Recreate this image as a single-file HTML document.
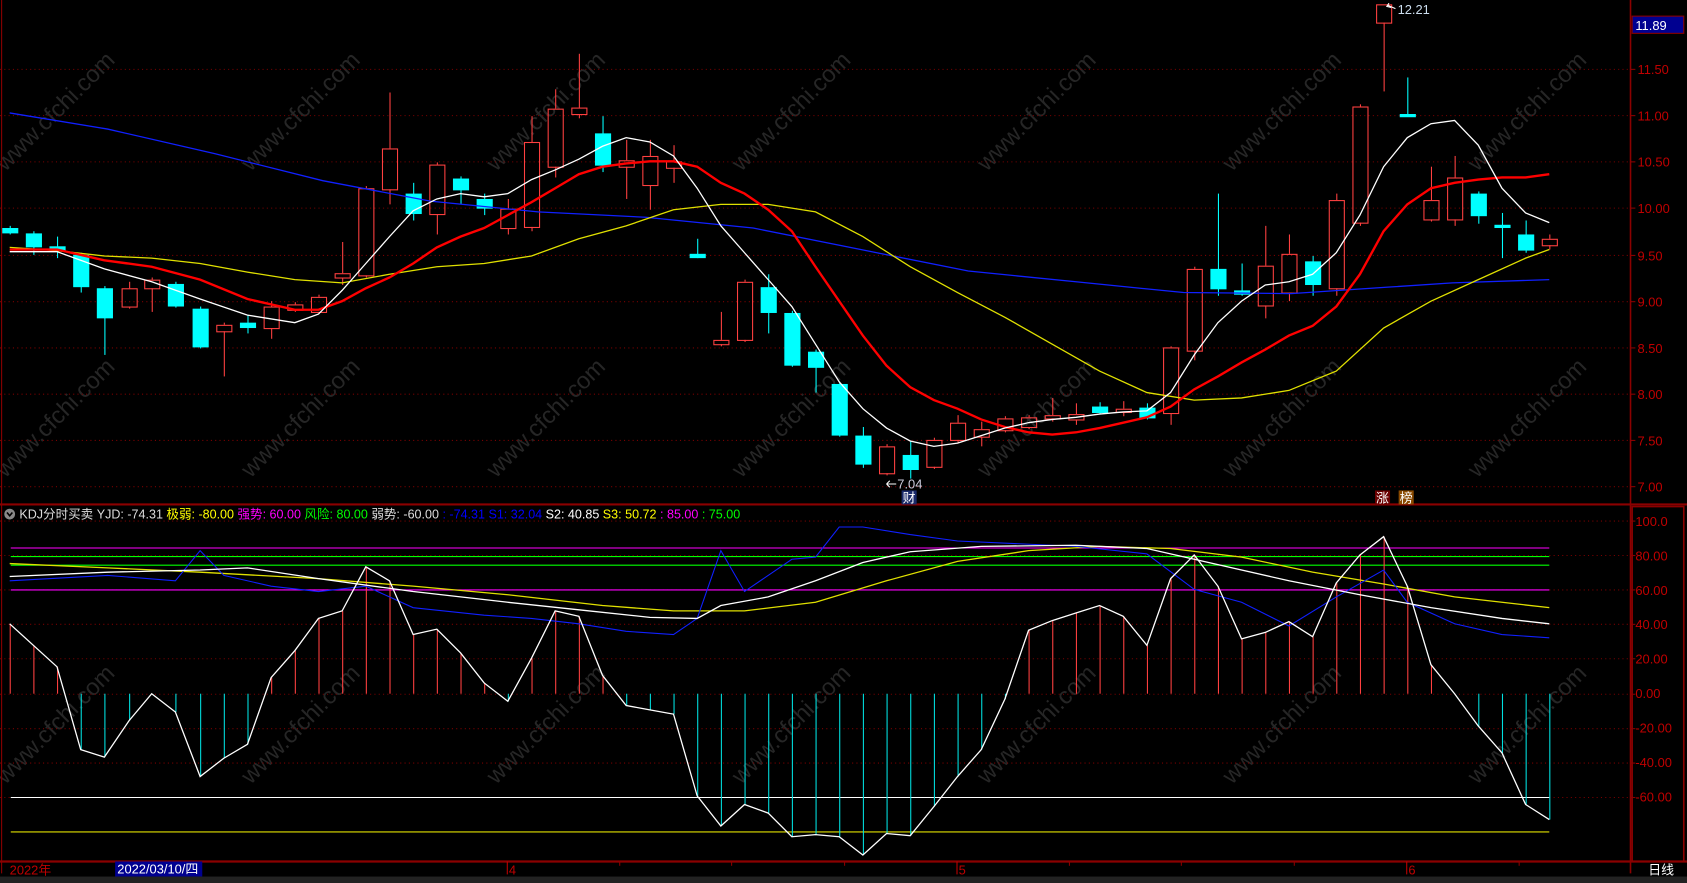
<!DOCTYPE html>
<html><head><meta charset="utf-8"><style>
html,body{margin:0;padding:0;background:#000;overflow:hidden}
svg{display:block}
text{font-family:"Liberation Sans","Noto Sans CJK SC",sans-serif}
</style></head><body>
<svg id="s" width="1687" height="883" viewBox="0 0 1568 821" preserveAspectRatio="none" xmlns="http://www.w3.org/2000/svg">
<rect width="1568" height="821" fill="#000"/>
<g id="wm" fill="#262626" font-size="22"></g>
<g id="grid"></g>
<g id="g"></g>
<line x1="0" y1="469" x2="1568" y2="469" stroke="#8b0000" stroke-width="2"/>
<line x1="0" y1="801" x2="1568" y2="801" stroke="#8b0000" stroke-width="2"/>
<line x1="1515.5" y1="0" x2="1515.5" y2="812" stroke="#8b0000" stroke-width="1.5"/>
<line x1="1.5" y1="0" x2="1.5" y2="812" stroke="#8b0000" stroke-width="1"/>
<rect x="1517" y="471" width="48" height="330" fill="none" stroke="#8b0000" stroke-width="1.5"/>
<rect x="1517" y="15" width="48" height="16" fill="#000090" stroke="#8b0000"/>
<text x="1520" y="28" fill="#fff" font-size="12">11.89</text>
<g fill="#c00000" font-size="12">
<text x="1522" y="69">11.50</text><text x="1522" y="112">11.00</text><text x="1522" y="155">10.50</text>
<text x="1522" y="198">10.00</text><text x="1522" y="242">9.50</text><text x="1522" y="285">9.00</text>
<text x="1522" y="328">8.50</text><text x="1522" y="371">8.00</text><text x="1522" y="414">7.50</text>
<text x="1522" y="457">7.00</text>
<text x="1520" y="489">100.0</text><text x="1520" y="521">80.00</text><text x="1520" y="553">60.00</text>
<text x="1520" y="585">40.00</text><text x="1520" y="617">20.00</text><text x="1520" y="649">0.00</text>
<text x="1520" y="681">-20.00</text><text x="1520" y="713">-40.00</text><text x="1520" y="745">-60.00</text>
</g>
<circle cx="9" cy="478" r="5" fill="#888"/><path d="M6.5 476.5 L9 479.5 L11.5 476.5" stroke="#000" stroke-width="1.5" fill="none"/>
<text y="482" font-size="11.6" textLength="670" lengthAdjust="spacingAndGlyphs" x="18"><tspan fill="#ddd">KDJ分时买卖 YJD: -74.31 </tspan><tspan fill="#ff0">极弱: -80.00 </tspan><tspan fill="#f0f">强势: 60.00 </tspan><tspan fill="#0f0">风险: 80.00 </tspan><tspan fill="#ddd">弱势: -60.00 </tspan><tspan fill="#00f">: -74.31 S1: 32.04 </tspan><tspan fill="#fff">S2: 40.85 </tspan><tspan fill="#ff0">S3: 50.72 </tspan><tspan fill="#f0f">: 85.00 </tspan><tspan fill="#0f0">: 75.00</tspan></text>
<path d="M1290 5 L1297 8" stroke="#fff"/><path d="M1291 3 L1289 6 L1293 7" stroke="#fff" fill="none"/>
<text x="1299" y="13" fill="#cde" font-size="12">12.21</text>
<path d="M824 450 L833 450 M824 450 l3 -3 M824 450 l3 3" stroke="#fff" fill="none"/>
<text x="834" y="454" fill="#ccd" font-size="12">7.04</text>
<rect x="838" y="456" width="14" height="13" fill="#1a2a6a"/><text x="839" y="467" fill="#fff" font-size="12">财</text>
<rect x="1278" y="456" width="14" height="13" fill="#6a0000"/><text x="1279" y="467" fill="#fff" font-size="12">涨</text>
<rect x="1300" y="456" width="14" height="13" fill="#8a4a00"/><text x="1301" y="467" fill="#fff" font-size="12">榜</text>
<text x="9" y="813" fill="#c00000" font-size="12">2022年</text>
<rect x="107" y="801" width="81" height="14" fill="#000090"/>
<text x="109" y="812" fill="#fff" font-size="12">2022/03/10/四</text>
<line x1="471.5" y1="801" x2="471.5" y2="813" stroke="#c00000"/><text x="473" y="813" fill="#c00000" font-size="12">4</text>
<line x1="889.5" y1="801" x2="889.5" y2="813" stroke="#c00000"/><text x="891" y="813" fill="#c00000" font-size="12">5</text>
<line x1="1307.5" y1="801" x2="1307.5" y2="813" stroke="#c00000"/><text x="1309" y="813" fill="#c00000" font-size="12">6</text>
<g stroke="#8b0000"><line x1="576" y1="801" x2="576" y2="805"/><line x1="680" y1="801" x2="680" y2="805"/><line x1="785" y1="801" x2="785" y2="805"/><line x1="994" y1="801" x2="994" y2="805"/><line x1="1098" y1="801" x2="1098" y2="805"/><line x1="1203" y1="801" x2="1203" y2="805"/><line x1="1412" y1="801" x2="1412" y2="805"/></g>
<text x="1532" y="813" fill="#fff" font-size="12">日线</text>
<rect x="0" y="815" width="1568" height="6" fill="#222"/>
</svg>
<script>
var NS="http://www.w3.org/2000/svg",g=document.getElementById('g'),gr=document.getElementById('grid'),wm=document.getElementById('wm');
function el(p,t,a){var e=document.createElementNS(NS,t);for(var k in a)e.setAttribute(k,a[k]);p.appendChild(e);return e;}
[64,107,150,193,237,280,323,366,409,452].forEach(function(y){el(gr,'line',{x1:0,x2:1515,y1:y+.5,y2:y+.5,stroke:'#7a0000','stroke-dasharray':'1 3'});el(gr,'line',{x1:1515,x2:1520,y1:y+.5,y2:y+.5,stroke:'#8b0000'});});
[484,516,548,580,612,645,677,709,741].forEach(function(y){el(gr,'line',{x1:0,x2:1515,y1:y+.5,y2:y+.5,stroke:'#7a0000','stroke-dasharray':'1 3'});el(gr,'line',{x1:1515,x2:1520,y1:y+.5,y2:y+.5,stroke:'#8b0000'});});
for(var i=0;i<7;i++)for(var j=0;j<3;j++){var x=5+i*228,y=160+j*285;var t=el(wm,'text',{x:x,y:y,transform:'rotate(-45 '+x+' '+y+')'});t.textContent='www.cfchi.com';}
var C=[[9,212,216,210,218,0],[31,217,229,215,237,0],[53,229,232,220,240,0],[75,237,266,235,272,0],[97,268,295,266,330,0],[120,285,268,262,287,1],[141,268,260,258,290,1],[163,264,284,262,286,0],[186,287,322,285,324,0],[208,308,302,300,350,1],[230,300,304,293,310,0],[252,305,285,280,315,1],[274,288,283,281,290,1],[296,290,276,274,292,1],[318,258,254,225,265,1],[340,256,175,173,258,1],[362,176,138,86,190,1],[384,180,198,170,205,0],[406,199,153,151,218,1],[428,166,176,164,190,0],[450,185,193,180,200,0],[472,212,194,185,218,1],[494,211,132,108,215,1],[516,155,101,83,165,1],[538,106,100,50,110,1],[560,124,153,108,160,0],[582,155,149,130,185,1],[604,172,145,130,195,1],[626,156,150,135,170,1],[648,236,239,222,240,0],[670,320,316,290,322,1],[692,316,262,260,318,1],[714,267,290,255,310,0],[736,291,339,289,341,0],[758,327,341,325,365,0],[780,357,404,355,406,0],[802,405,431,397,435,0],[824,440,415,413,442,1],[846,423,436,410,445,0],[868,434,409,407,436,1],[890,409,393,386,412,1],[912,406,399,392,415,1],[934,400,389,387,402,1],[956,397,388,386,399,1],[978,389,386,370,392,1],[1000,390,385,375,395,1],[1022,378,383,374,385,0],[1044,383,380,373,387,1],[1066,379,388,375,390,0],[1088,384,323,322,395,1],[1110,326,250,248,335,1],[1132,250,268,180,275,0],[1154,270,273,245,275,0],[1176,284,247,210,296,1],[1198,272,236,218,280,1],[1220,243,264,238,275,0],[1242,268,186,180,275,1],[1264,207,99,97,210,1],[1286,21,4,4,85,1],[1308,106,108,72,108,0],[1330,204,186,155,206,1],[1352,204,165,145,210,1],[1374,180,200,178,208,0],[1396,209,211,198,240,0],[1418,218,232,205,235,0],[1440,228,222,218,232,1]];
var W=7;
C.forEach(function(c){var x=c[0],top=Math.min(c[1],c[2]),bot=Math.max(c[1],c[2]),h=Math.max(bot-top,1);
 if(c[5]){el(g,'line',{x1:x+.5,x2:x+.5,y1:c[3],y2:top,stroke:'#ff4040'});el(g,'line',{x1:x+.5,x2:x+.5,y1:bot,y2:c[4],stroke:'#ff4040'});el(g,'rect',{x:x-W+.5,y:top+.5,width:2*W,height:h,fill:'none',stroke:'#ff4040'});}
 else{el(g,'line',{x1:x+.5,x2:x+.5,y1:c[3],y2:c[4],stroke:'#00ffff'});el(g,'rect',{x:x-W,y:top,width:2*W+1,height:h+1,fill:'#00ffff'});}});
function pl(pts,col,w){el(g,'polyline',{points:pts.map(function(p){return p.join(',')}).join(' '),fill:'none',stroke:col,'stroke-width':w});}
pl([[9,105],[100,120],[200,143],[300,168],[400,187],[500,197],[600,202],[700,212],[800,232],[900,252],[1000,262],[1100,272],[1200,273],[1290,267],[1350,263],[1440,260]],'#1020ff',1.2);
pl([[9,230],[53,233],[97,238],[141,240],[186,245],[230,253],[274,260],[318,263],[362,255],[406,248],[450,245],[494,238],[538,222],[582,210],[626,195],[670,190],[714,190],[758,197],[802,220],[846,248],[890,272],[934,295],[978,320],[1022,345],[1066,365],[1110,372],[1154,370],[1198,363],[1242,345],[1286,305],[1330,280],[1374,260],[1418,240],[1440,232]],'#e0e000',1.2);
pl([[9,232],[53,232],[97,242],[141,248],[186,260],[230,278],[274,288],[296,288],[318,280],[340,268],[362,258],[384,245],[406,230],[428,220],[450,212],[472,200],[494,188],[516,175],[538,162],[560,155],[582,152],[604,150],[626,150],[648,155],[670,170],[692,180],[714,195],[736,215],[758,248],[780,280],[802,312],[824,340],[846,360],[868,372],[890,380],[912,390],[934,397],[956,402],[978,404],[1000,402],[1022,398],[1044,393],[1066,388],[1088,378],[1110,362],[1132,350],[1154,337],[1176,325],[1198,312],[1220,303],[1242,285],[1264,255],[1286,215],[1308,190],[1330,175],[1352,170],[1374,167],[1396,165],[1418,165],[1440,162]],'#ff0000',2.2);
pl([[9,234],[53,234],[97,250],[141,262],[186,278],[230,293],[274,300],[296,292],[318,270],[340,245],[362,220],[384,196],[406,185],[428,180],[450,183],[472,180],[494,167],[516,158],[538,148],[560,136],[582,128],[604,132],[626,145],[648,175],[670,210],[692,235],[714,260],[736,285],[758,320],[780,355],[802,380],[824,398],[846,410],[868,415],[890,412],[912,405],[934,398],[956,393],[978,390],[1000,388],[1022,385],[1044,383],[1066,382],[1088,365],[1110,330],[1132,300],[1154,280],[1176,265],[1198,262],[1220,255],[1242,235],[1264,200],[1286,155],[1308,128],[1330,115],[1352,112],[1374,135],[1396,175],[1418,198],[1440,207]],'#ffffff',1.2);
[[509,'#ff00ff'],[517,'#00ff00'],[525,'#00ff00'],[548,'#ff00ff'],[741,'#ffffff'],[773,'#e0e000']].forEach(function(a){el(g,'line',{x1:10,x2:1440,y1:a[0]+.5,y2:a[0]+.5,stroke:a[1]});});
var O=[[9,580],[31,600],[53,620],[75,697],[97,704],[120,670],[141,645],[163,662],[186,722],[208,705],[230,692],[252,630],[274,605],[296,575],[318,568],[340,527],[362,540],[384,590],[406,585],[428,607],[450,635],[472,652],[494,612],[516,568],[538,573],[560,628],[582,656],[604,660],[626,664],[648,740],[670,768],[692,748],[714,756],[736,778],[758,776],[780,778],[802,795],[824,775],[846,777],[868,750],[890,722],[912,697],[934,650],[956,586],[978,577],[1000,570],[1022,563],[1044,573],[1066,600],[1088,538],[1110,516],[1132,545],[1154,594],[1176,588],[1198,578],[1220,592],[1242,542],[1264,516],[1286,499],[1308,545],[1330,618],[1352,645],[1374,675],[1396,700],[1418,748],[1440,762]];
O.forEach(function(p){el(g,'line',{x1:p[0]+.5,x2:p[0]+.5,y1:645,y2:p[1],stroke:p[1]<645?'#ff4040':'#00e0e0'});});
pl([[9,524],[100,528],[186,532],[296,538],[384,545],[472,553],[560,563],[626,568],[692,568],[758,560],[824,540],[890,522],[956,512],[1022,508],[1088,510],[1154,518],[1220,532],[1286,543],[1352,555],[1440,565]],'#e0e000',1.2);
pl([[9,540],[100,535],[163,540],[186,512],[208,535],[252,545],[296,550],[340,545],[384,565],[450,572],[494,575],[538,580],[582,587],[626,590],[648,575],[670,512],[692,550],[736,520],[758,518],[780,490],[802,490],[846,497],[890,503],[1000,508],[1066,515],[1110,548],[1154,560],[1198,582],[1242,555],[1286,530],[1308,560],[1352,580],[1396,590],[1440,593]],'#1020ff',1);
pl([[9,536],[100,532],[186,530],[230,528],[296,538],[384,550],[472,560],[538,567],[604,574],[648,575],[670,563],[714,555],[758,540],[802,523],[846,513],[912,508],[1000,507],[1066,510],[1110,520],[1198,540],[1264,553],[1330,565],[1396,575],[1440,580]],'#ffffff',1.2);
pl(O,'#ffffff',1.2);
</script>
</body></html>
